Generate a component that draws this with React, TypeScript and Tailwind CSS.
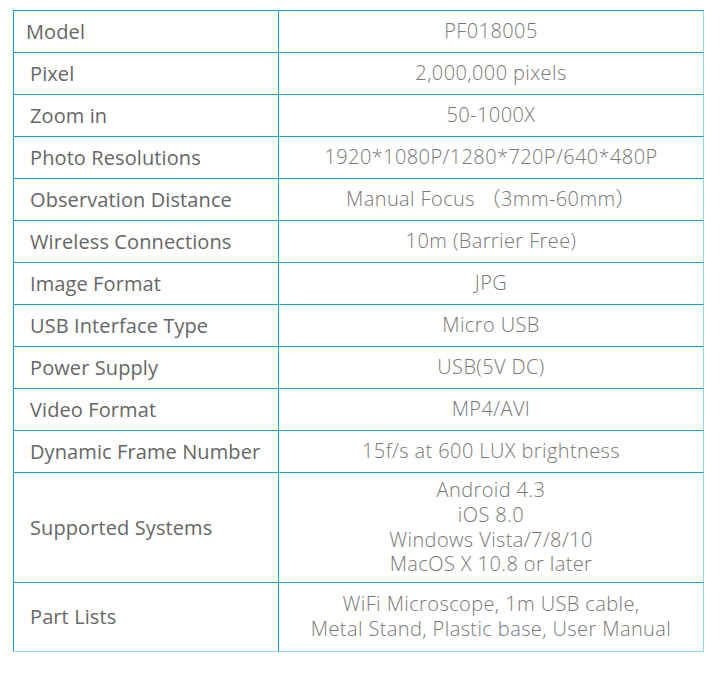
import React from "react";

type Row = { label: string; value: string[]; tall?: "sys" | "parts"; first?: boolean };

const rows: Row[] = [
  { label: "Model", value: ["PF018005"], first: true },
  { label: "Pixel", value: ["2,000,000 pixels"] },
  { label: "Zoom in", value: ["50-1000X"] },
  { label: "Photo Resolutions", value: ["1920*1080P/1280*720P/640*480P"] },
  { label: "Observation Distance", value: ["Manual Focus （3mm-60mm）"] },
  { label: "Wireless Connections", value: ["10m (Barrier Free)"] },
  { label: "Image Format", value: ["JPG"] },
  { label: "USB Interface Type", value: ["Micro USB"] },
  { label: "Power Supply", value: ["USB(5V DC)"] },
  { label: "Video Format", value: ["MP4/AVI"] },
  { label: "Dynamic Frame Number", value: ["15f/s at 600 LUX brightness"] },
  {
    label: "Supported Systems",
    value: ["Android 4.3", "iOS 8.0", "Windows Vista/7/8/10", "MacOS X 10.8 or later"],
    tall: "sys",
  },
  {
    label: "Part Lists",
    value: ["WiFi Microscope, 1m USB cable,", "Metal Stand, Plastic base, User Manual"],
    tall: "parts",
  },
];

function heightClass(r: Row) {
  if (r.tall === "sys") return "h-[110px]";
  if (r.tall === "parts") return "h-[69px]";
  return "h-[42px]";
}

export default function App() {
  return (
    <div className="w-[720px] h-[679px] bg-white pt-[10px] pl-[13px] font-['Open_Sans','Noto_Sans_CJK_JP',sans-serif]">
      <div className="w-[691px] border-t border-solid border-[#1aa0d0] grid grid-cols-[266px_1fr]">
        {rows.map((r, i) => {
          const last = i === rows.length - 1;
          const h = heightClass(r);
          return (
            <React.Fragment key={r.label}>
              <div
                className={`${h} flex items-center border-l border-r border-b border-solid border-l-[#1aa0d0] border-r-[#1aa0d0] ${
                  last ? "border-b-[#8fd8ea]" : "border-b-[#1aa0d0]"
                } ${r.first ? "pl-[12px]" : "pl-[16px]"} text-[20px] text-[#666666] tracking-[0.1px]`}
              >
                {r.label}
              </div>
              <div
                className={`${h} flex flex-col items-center justify-center border-r border-b border-solid border-r-[#8fd8ea] ${
                  last ? "border-b-[#8fd8ea]" : "border-b-[#1aa0d0]"
                } text-[20px] font-light text-[#777777] leading-[24.6px] text-center tracking-[0.4px]`}
              >
                {r.value.map((v) => (
                  <div key={v}>{v}</div>
                ))}
              </div>
            </React.Fragment>
          );
        })}
      </div>
    </div>
  );
}
